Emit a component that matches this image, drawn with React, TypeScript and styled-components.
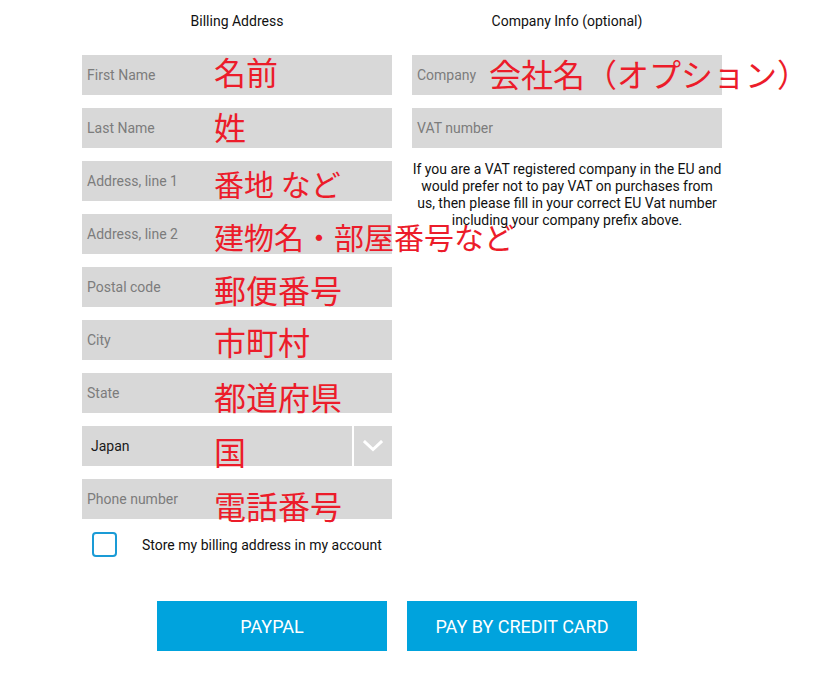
import styled, { createGlobalStyle } from 'styled-components'

const GlobalStyle = createGlobalStyle`
  body {
    margin: 0;
    background: #ffffff;
    font-family: Roboto, 'Liberation Sans', sans-serif;
    color: #111111;
  }
`

interface FieldDef {
  placeholder: string
  note: string
  noteTop: number
  noteSize?: number
}

const billingFields: FieldDef[] = [
  { placeholder: 'First Name', note: '名前', noteTop: 0 },
  { placeholder: 'Last Name', note: '姓', noteTop: 2 },
  { placeholder: 'Address, line 1', note: '番地 など', noteTop: 7, noteSize: 30 },
  {
    placeholder: 'Address, line 2',
    note: '建物名・部屋番号など',
    noteTop: 7,
    noteSize: 30,
  },
  { placeholder: 'Postal code', note: '郵便番号', noteTop: 6 },
  { placeholder: 'City', note: '市町村', noteTop: 5 },
  { placeholder: 'State', note: '都道府県', noteTop: 7 },
]

function ChevronDown() {
  return (
    <svg width="20" height="12" viewBox="0 0 20 12" aria-hidden>
      <polyline
        points="2,2 10,9.5 18,2"
        fill="none"
        stroke="#ffffff"
        strokeWidth="3"
        strokeLinecap="square"
      />
    </svg>
  )
}

export default function App() {
  return (
    <>
      <GlobalStyle />
      <Page>
        <Columns>
          <Column>
            <Heading>Billing Address</Heading>
            <FieldList>
              {billingFields.map((f) => (
                <Field key={f.placeholder}>
                  <Placeholder>{f.placeholder}</Placeholder>
                  <Note $top={f.noteTop} $left={132} $size={f.noteSize}>
                    {f.note}
                  </Note>
                </Field>
              ))}
              <Field>
                <SelectValue>Japan</SelectValue>
                <SelectArrow>
                  <ChevronDown />
                </SelectArrow>
                <Note $top={9} $left={132}>
                  国
                </Note>
              </Field>
              <Field>
                <Placeholder>Phone number</Placeholder>
                <Note $top={10} $left={132}>
                  電話番号
                </Note>
              </Field>
            </FieldList>
            <CheckRow>
              <CheckBox />
              <CheckLabel>Store my billing address in my account</CheckLabel>
            </CheckRow>
          </Column>

          <Column>
            <Heading>Company Info (optional)</Heading>
            <FieldList>
              <Field>
                <Placeholder>Company</Placeholder>
                <Note $top={2} $left={77}>
                  会社名（オプション）
                </Note>
              </Field>
              <Field>
                <Placeholder>VAT number</Placeholder>
              </Field>
            </FieldList>
            <VatInfo>
              If you are a VAT registered company in the EU and would prefer
              not to pay VAT on purchases from us, then please fill in your
              correct EU Vat number including your company prefix above.
            </VatInfo>
          </Column>
        </Columns>

        <Buttons>
          <PayButton>PayPal</PayButton>
          <PayButton>Pay by credit card</PayButton>
        </Buttons>
      </Page>
    </>
  )
}

const Page = styled.div`
  padding: 0 0 30px 82px;
`

const Columns = styled.div`
  display: flex;
  gap: 20px;
  align-items: flex-start;
`

const Column = styled.div`
  width: 310px;
  display: flex;
  flex-direction: column;
`

const Heading = styled.h2`
  margin: 0;
  padding: 13px 0 26px;
  font-size: 14px;
  line-height: 16px;
  font-weight: 400;
  text-align: center;
  color: #111111;
`

const FieldList = styled.div`
  display: flex;
  flex-direction: column;
  gap: 13px;
`

const Field = styled.div`
  position: relative;
  height: 40px;
  background: #d8d8d8;
  display: flex;
  align-items: center;
  padding-left: 5px;
`

const Placeholder = styled.span`
  font-size: 14px;
  color: #7c7c7c;
`

const SelectValue = styled.span`
  flex: 1;
  padding-left: 4px;
  font-size: 14px;
  color: #1a1a1a;
`

const SelectArrow = styled.span`
  width: 38px;
  height: 100%;
  border-left: 2px solid #ffffff;
  display: flex;
  align-items: center;
  justify-content: center;
`

const Note = styled.span<{ $top: number; $left: number; $size?: number }>`
  position: absolute;
  top: ${({ $top }) => $top}px;
  left: ${({ $left }) => $left}px;
  font-family: 'Noto Sans CJK JP', sans-serif;
  font-size: ${({ $size = 32 }) => $size}px;
  line-height: ${({ $size = 32 }) => $size}px;
  color: #ec1c2a;
  white-space: nowrap;
  text-spacing-trim: space-all;
  z-index: 1;
`

const CheckRow = styled.label`
  display: flex;
  align-items: center;
  gap: 25px;
  margin-top: 13px;
  padding-left: 10px;
`

const CheckBox = styled.span`
  width: 25px;
  height: 25px;
  box-sizing: border-box;
  border: 2px solid #1a9bd6;
  border-radius: 4px;
`

const CheckLabel = styled.span`
  font-size: 14px;
  color: #111111;
`

const VatInfo = styled.p`
  margin: 13px 0 0;
  font-size: 14px;
  line-height: 17px;
  text-align: center;
  color: #111111;
`

const Buttons = styled.div`
  display: flex;
  gap: 20px;
  margin-top: 44px;
  padding-left: 75px;
`

const PayButton = styled.button`
  width: 230px;
  height: 50px;
  border: none;
  background: #00a3dd;
  color: #ffffff;
  font-family: Roboto, 'Liberation Sans', sans-serif;
  font-size: 18px;
  text-transform: uppercase;
  cursor: pointer;
`
